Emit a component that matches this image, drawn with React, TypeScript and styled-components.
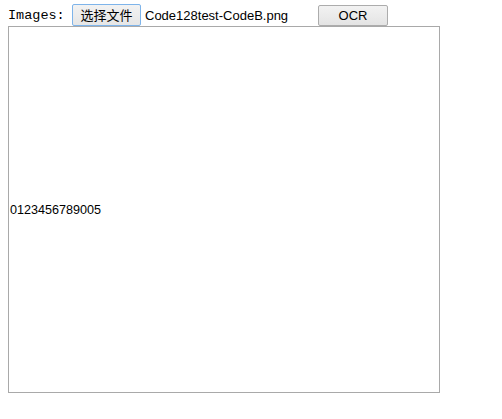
import React from "react";
import styled, { createGlobalStyle } from "styled-components";

const Global = createGlobalStyle`
  html, body { margin: 0; padding: 0; background: #fff; }
  body { padding: 4px 8px 8px 8px; font-family: "Liberation Sans", Arial, sans-serif; }
`;

const Toolbar = styled.div`
  display: flex;
  align-items: center;
  height: 22px;
`;

const Label = styled.span`
  font-family: "Liberation Mono", "DejaVu Sans Mono", monospace;
  font-size: 13.5px;
  color: #000;
  width: 64px;
`;

const FileButton = styled.button`
  box-sizing: border-box;
  width: 69px;
  height: 22px;
  padding: 0;
  margin: 0;
  border: 1px solid #7eb4ea;
  border-radius: 2px;
  background: linear-gradient(#f2f2f2, #e6e6e6);
  font-family: "Noto Sans CJK SC", sans-serif;
  font-size: 13px;
  line-height: 18px;
  color: #000;
`;

const FileName = styled.span`
  font-family: "Liberation Sans", Arial, sans-serif;
  font-size: 13px;
  color: #000;
  margin-left: 4px;
  width: 173px;
`;

const OcrButton = styled.button`
  box-sizing: border-box;
  width: 70px;
  height: 21px;
  padding: 0;
  margin: 1px 0 0 0;
  border: 1px solid #acacac;
  border-radius: 2px;
  background: linear-gradient(#f2f2f2, #e4e4e4);
  font-family: "Liberation Sans", Arial, sans-serif;
  font-size: 13px;
  color: #000;
`;

const ResultBox = styled.div`
  box-sizing: border-box;
  width: 432px;
  height: 367px;
  border: 1px solid #a9a9a9;
  display: flex;
  align-items: center;
  padding-left: 1px;
  font-family: "Liberation Sans", Arial, sans-serif;
  font-size: 12.6px;
  color: #000;
`;

export default function App() {
  return (
    <>
      <Global />
      <Toolbar>
        <Label>Images:</Label>
        <FileButton>选择文件</FileButton>
        <FileName>Code128test-CodeB.png</FileName>
        <OcrButton>OCR</OcrButton>
      </Toolbar>
      <ResultBox>0123456789005</ResultBox>
    </>
  );
}
